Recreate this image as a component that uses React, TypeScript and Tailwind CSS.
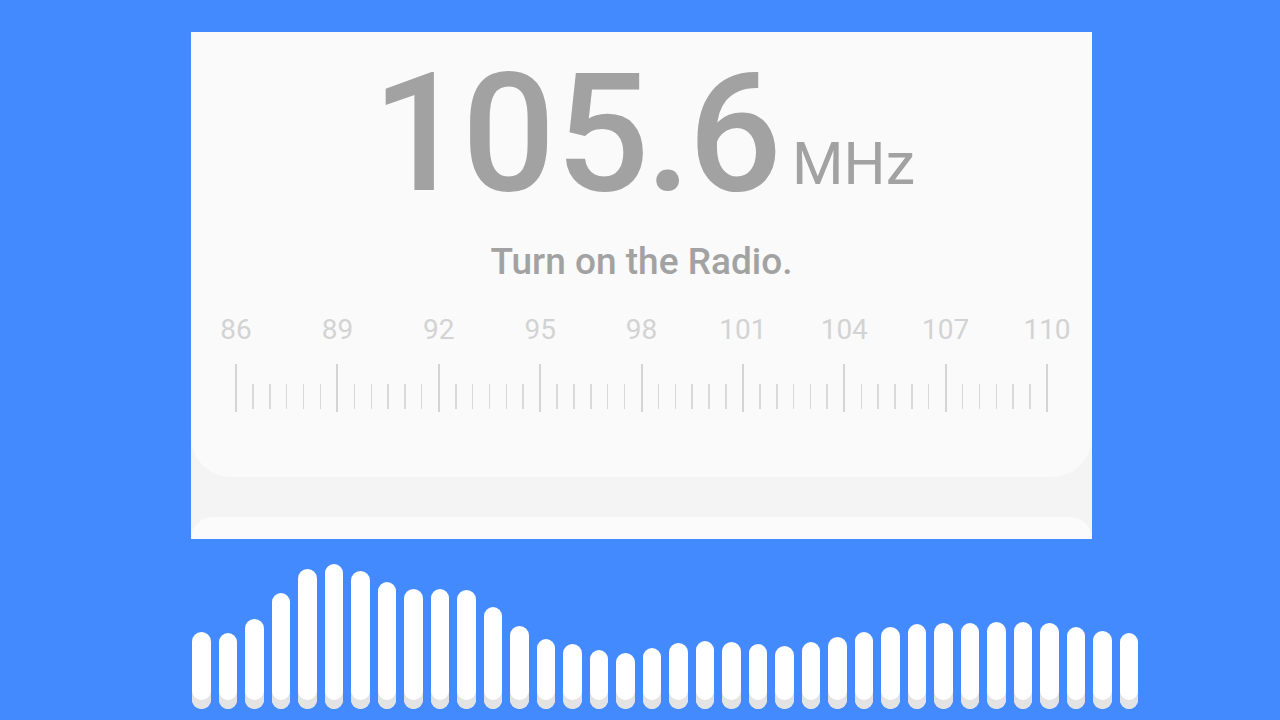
import React from 'react';

const labels = ['86', '89', '92', '95', '98', '101', '104', '107', '110'];

const bars = [
  77, 76, 90, 116, 140, 145, 138, 127, 120, 120, 119, 102, 83, 70, 65, 59, 56, 61,
  66, 68, 67, 65, 63, 67, 72, 77, 82, 85, 86, 86, 87, 87, 86, 82, 78, 76,
];

function Scale() {
  const ticks = Array.from({ length: 49 }, (_, i) => i);
  return (
    <div className="ml-[44px] w-[813px]">
      <div className="flex justify-between">
        {labels.map((l) => (
          <div key={l} className="w-[2px] flex justify-center">
            <span className="whitespace-nowrap text-[28px] leading-none text-[#d3d3d3]">{l}</span>
          </div>
        ))}
      </div>
      <div className="mt-[20px] flex h-[48px] items-end justify-between">
        {ticks.map((i) =>
          i % 6 === 0 ? (
            <div key={i} className="h-[48px] w-[2px] bg-[#d4d4d4]" />
          ) : (
            <div key={i} className="mb-[3px] h-[25px] w-[1.5px] bg-[#d9d9d9]" />
          )
        )}
      </div>
    </div>
  );
}

export default function App() {
  return (
    <div
      className="h-[720px] w-[1280px] overflow-hidden bg-[#448aff]"
      style={{ fontFamily: 'Roboto, "Noto Sans", sans-serif' }}
    >
      <div className="pl-[191px] pt-[32px]">
        <div className="flex h-[507px] w-[901px] flex-col bg-[#f4f4f4]">
          <div className="h-[445px] rounded-b-[40px] bg-[#fafafa] pt-[19px]">
            <div className="flex items-baseline justify-center pl-[4px]">
              <span className="text-[165px] font-medium leading-none text-[#a2a2a2]">
                <span className="tracking-[-4px]">1</span>
                <span>0</span>
                <span className="tracking-[-4px]">5</span>
                <span className="tracking-[-3px]">.</span>
                <span>6</span>
              </span>
              <span className="ml-[10px] -translate-y-[6px] text-[59px] leading-none text-[#a2a2a2]">MHz</span>
            </div>
            <div className="mt-[27px] text-center text-[37px] font-medium leading-none text-[#a2a2a2]">
              Turn on the Radio.
            </div>
            <div className="mt-[36px]">
              <Scale />
            </div>
          </div>
          <div className="mt-[40px] flex-1 rounded-t-[40px] bg-[#fbfbfb]" />
        </div>
      </div>
      <div className="ml-[192px] flex h-[170px] items-end gap-[8px]">
        {bars.map((h, i) => (
          <div
            key={i}
            className="w-[18.5px] rounded-full bg-white shadow-[inset_0_-9px_0_#e3e3e3]"
            style={{ height: h }}
          />
        ))}
      </div>
    </div>
  );
}
